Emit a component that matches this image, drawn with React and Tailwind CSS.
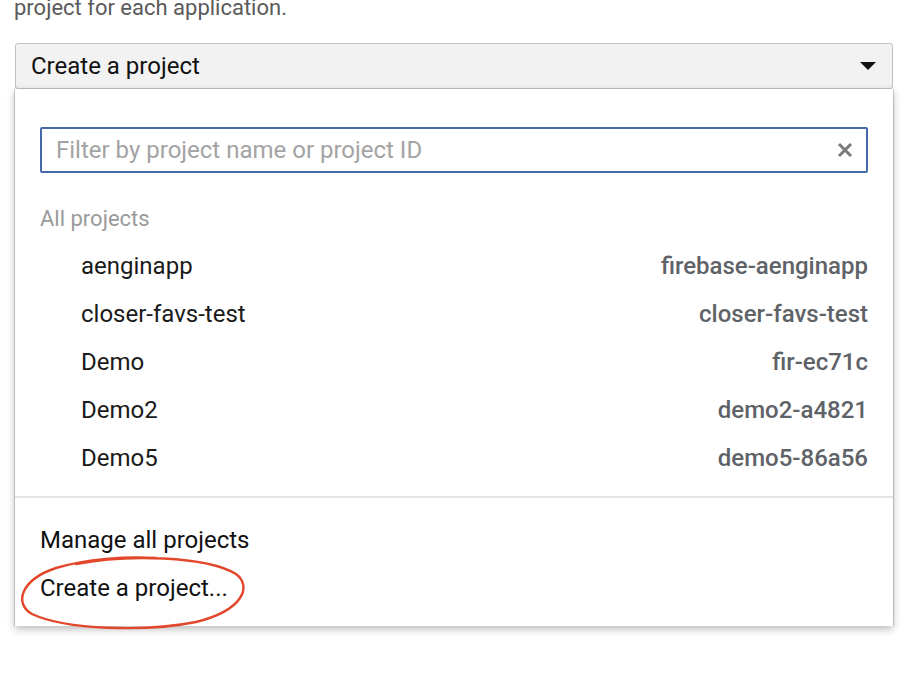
import React from "react";

const projects = [
  ["aenginapp", "firebase-aenginapp"],
  ["closer-favs-test", "closer-favs-test"],
  ["Demo", "fir-ec71c"],
  ["Demo2", "demo2-a4821"],
  ["Demo5", "demo5-86a56"],
];

export default function App() {
  return (
    <div
      className="w-[924px] h-[674px] bg-white overflow-hidden"
      style={{ fontFamily: "Roboto, 'Noto Sans', sans-serif" }}
    >
      <div className="pl-[14px] mt-[-3px] text-[22px] leading-[22px] text-[#5a5a5a]">
        project for each application.
      </div>
      <div className="mx-[15px] w-[878px] mt-[24px]">
        <div className="h-[46px] flex items-center justify-between bg-[#f2f2f2] border border-[#c2c2c2] rounded-[3px] pl-[15px] pr-[16px] shadow-[0_1px_1px_rgba(0,0,0,0.12)]">
          <span className="text-[24px] text-[#111]">Create a project</span>
          <svg width="16" height="8" viewBox="0 0 16 8">
            <path d="M0 0 L16 0 L8 8 Z" fill="#111" />
          </svg>
        </div>
        <div className="relative bg-white h-[537px] shadow-[0_3px_8px_rgba(0,0,0,0.28),-1px_0_0_#d4d4d4,1px_0_0_#d4d4d4] flex flex-col">
          <div className="px-[25px] pt-[38px]">
            <div className="h-[46px] border-2 border-[#4468a8] rounded-[2px] flex items-center justify-between pl-[14px] pr-[13px]">
              <span className="text-[24px] text-[#a3a3a3]">
                Filter by project name or project ID
              </span>
              <svg width="16" height="16" viewBox="0 0 16 16">
                <path
                  d="M2 2 L14 14 M14 2 L2 14"
                  stroke="#7a7a7a"
                  strokeWidth="3"
                />
              </svg>
            </div>
            <div className="mt-[21px] h-[48px] flex items-center text-[22px] text-[#9a9a9a]">
              All projects
            </div>
            {projects.map(([name, id]) => (
              <div
                key={name}
                className="h-[48px] flex items-center justify-between pl-[41px]"
              >
                <span className="text-[24px] text-[#1a1a1a]">{name}</span>
                <span className="text-[24px] font-medium text-[#5f6368]">
                  {id}
                </span>
              </div>
            ))}
          </div>
          <div className="mt-[14px] h-[2px] bg-[#e4e4e4]" />
          <div className="px-[25px] pt-[18px]">
            <div className="h-[48px] flex items-center text-[24px] text-[#111]">
              Manage all projects
            </div>
            <div className="h-[48px] flex items-center text-[24px] text-[#111]">
              Create a project...
            </div>
          </div>
          <svg
            className="absolute left-[1px] top-[465px]"
            width="240"
            height="78"
            viewBox="0 0 240 78"
          >
            <path
              d="M60 10 C 110 0, 190 2, 220 20 C 236 32, 228 56, 180 68 C 130 78, 50 76, 16 60 C -2 50, 4 26, 40 14 C 70 5, 110 2, 140 4"
              fill="none"
              stroke="#e2472b"
              strokeWidth="2.4"
              strokeLinecap="round"
            />
          </svg>
        </div>
      </div>
    </div>
  );
}
